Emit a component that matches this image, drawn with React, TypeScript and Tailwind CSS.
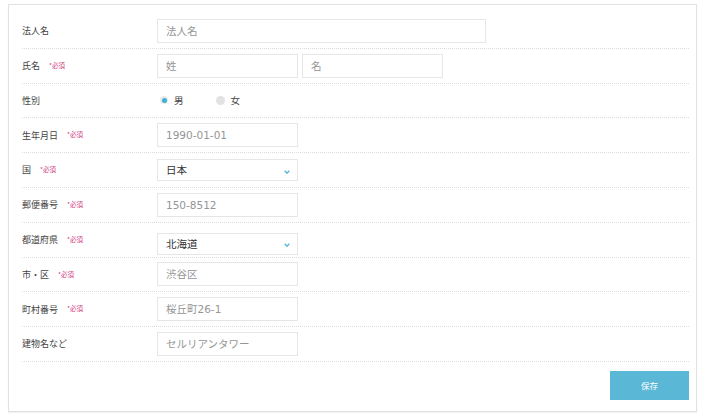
import type { ReactNode } from 'react'

const FONT = { fontFamily: '"Noto Sans CJK JP", "Noto Sans", sans-serif' }
const FIELD_FONT = { fontFamily: '"DejaVu Sans", "Noto Sans CJK JP", sans-serif' }

function Required() {
  return <span className="ml-[9px] text-[6.5px] text-[#d0407f]">*必須</span>
}

function Row({
  label,
  required,
  children,
}: {
  label: string
  required?: boolean
  children: ReactNode
}) {
  return (
    <div className="flex items-center h-[34.8px] border-b border-dotted border-[#dcdcdc]">
      <div className="w-[135px] shrink-0 flex items-center text-[9px] text-[#444]">
        <span>{label}</span>
        {required && <Required />}
      </div>
      <div className="flex items-center gap-1">{children}</div>
    </div>
  )
}

function TextField({ placeholder, width = 'w-[141px]' }: { placeholder: string; width?: string }) {
  return (
    <input
      readOnly
      placeholder={placeholder}
      style={FIELD_FONT}
      className={`${width} h-[24px] border border-[#e6e6e6] bg-white px-[8px] text-[10.5px] text-[#333] placeholder:text-[#959595] outline-none`}
    />
  )
}

function SelectField({ value, offset }: { value: string; offset?: boolean }) {
  return (
    <div
      className={`w-[141px] h-[22px] border border-[#e6e6e6] bg-white pl-[8px] pr-[7px] flex items-center justify-between text-[10.5px] text-[#333] ${
        offset ? 'mt-[8px]' : ''
      }`}
    >
      <span>{value}</span>
      <svg width="6" height="4" viewBox="0 0 6 4" className="mt-[3px]">
        <polyline points="0.7,0.8 3,3.2 5.3,0.8" fill="none" stroke="#4fb4d8" strokeWidth="1.3" />
      </svg>
    </div>
  )
}

function Radio({ label, checked }: { label: string; checked?: boolean }) {
  return (
    <label className="flex items-center text-[9.5px] text-[#444]">
      {checked ? (
        <span className="w-[8px] h-[8px] rounded-full bg-[#e9e9e9] flex items-center justify-center">
          <span className="w-[5px] h-[5px] rounded-full bg-[#3fb0d8]" />
        </span>
      ) : (
        <span className="w-[9px] h-[9px] rounded-full bg-[#e2e2e2]" />
      )}
      <span className="ml-[6px]">{label}</span>
    </label>
  )
}

export default function App() {
  return (
    <div className="w-[710px] h-[420px] bg-white pt-[4px] pl-[8px]" style={FONT}>
      <div className="w-[689px] h-[408px] border border-[#e2e2e2] shadow-[0_1px_1px_rgba(0,0,0,0.05)] bg-white pt-[9px] pl-[13px] pr-[7px]">
        <Row label="法人名">
          <TextField placeholder="法人名" width="w-[329px]" />
        </Row>
        <Row label="氏名" required>
          <TextField placeholder="姓" />
          <TextField placeholder="名" />
        </Row>
        <Row label="性別">
          <div className="flex items-center gap-[32px] pl-[3px]">
            <Radio label="男" checked />
            <Radio label="女" />
          </div>
        </Row>
        <Row label="生年月日" required>
          <TextField placeholder="1990-01-01" />
        </Row>
        <Row label="国" required>
          <SelectField value="日本" />
        </Row>
        <Row label="郵便番号" required>
          <TextField placeholder="150-8512" />
        </Row>
        <Row label="都道府県" required>
          <SelectField value="北海道" offset />
        </Row>
        <Row label="市・区" required>
          <TextField placeholder="渋谷区" />
        </Row>
        <Row label="町村番号" required>
          <TextField placeholder="桜丘町26-1" />
        </Row>
        <Row label="建物名など">
          <TextField placeholder="セルリアンタワー" />
        </Row>
        <div className="flex justify-end pt-[9px]">
          <button className="w-[79px] h-[29px] bg-[#5ab8d6] text-white text-[8.5px]">保存</button>
        </div>
      </div>
    </div>
  )
}
